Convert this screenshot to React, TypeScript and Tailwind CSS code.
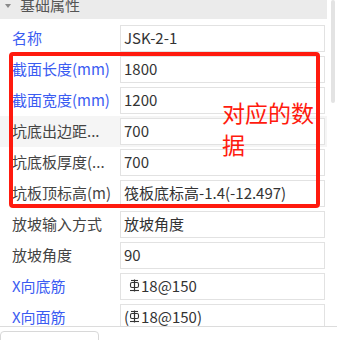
type Row = {
  label: string;
  value: string;
  blue?: boolean;
  shaded?: boolean;
  bar?: "plain" | "paren";
};

const rows: Row[] = [
  { label: "名称", value: "JSK-2-1", blue: true },
  { label: "截面长度(mm)", value: "1800", blue: true },
  { label: "截面宽度(mm)", value: "1200", blue: true },
  { label: "坑底出边距...", value: "700", shaded: true },
  { label: "坑底板厚度(...", value: "700" },
  { label: "坑板顶标高(m)", value: "筏板底标高-1.4(-12.497)" },
  { label: "放坡输入方式", value: "放坡角度" },
  { label: "放坡角度", value: "90" },
  { label: "X向底筋", value: "18@150", blue: true, bar: "plain" },
  { label: "X向面筋", value: "18@150)", blue: true, bar: "paren" },
];

const font = { fontFamily: '"Microsoft YaHei", "Noto Sans CJK SC", "Noto Sans", sans-serif' };

// HRB400 rebar grade symbol
function RebarMark() {
  return (
    <svg width="11" height="13" viewBox="0 0 11 13" className="mr-[1px] -mt-[2px]">
      <path d="M5.5 0.5 V12.5" stroke="#333" strokeWidth="1.2" />
      <path d="M2 1.5 H9" stroke="#333" strokeWidth="1.1" />
      <rect x="1.5" y="3.5" width="8" height="5" rx="1.5" fill="none" stroke="#333" strokeWidth="1.1" />
      <path d="M1 11.5 H10" stroke="#333" strokeWidth="1.1" />
    </svg>
  );
}

export default function App() {
  return (
    <div className="relative h-[340px] w-[337px] overflow-hidden bg-white" style={font}>
      <div className="flex h-[326px] overflow-hidden">
        <div className="w-[327px] shrink-0">
          <div className="flex h-[19px] items-center bg-[#ebebeb] pl-[5px]">
            <svg width="6" height="5" viewBox="0 0 6 5" className="mb-[6px]">
              <path d="M0 0 L6 0 L3 4 Z" fill="#8a8a8a" />
            </svg>
            <span className="-mt-[10px] ml-[9px] text-[15px] leading-none text-[#555]">基础属性</span>
          </div>
          <div className="pt-[4px]">
            {rows.map((r) => (
              <div
                key={r.label}
                className={`flex h-[31px] items-center ${r.shaded ? "bg-[#f5f5f5]" : ""}`}
              >
                <div
                  className={`w-[120px] shrink-0 whitespace-nowrap pl-[12px] text-[15px] ${
                    r.blue ? "text-[#3b5cf2]" : "text-[#444]"
                  }`}
                >
                  {r.label}
                </div>
                <div className="flex h-[27px] w-[205px] items-center whitespace-pre border-[1.5px] border-[#e2e2e2] bg-white pl-[3px] text-[15px] text-[#333]">
                  {r.bar === "plain" && <span className="w-[5px]" />}
                  {r.bar === "paren" && <span>(</span>}
                  {r.bar && <RebarMark />}
                  {r.value}
                </div>
              </div>
            ))}
          </div>
        </div>
        <div className="flex-1 pl-[4px]">
          <div className="h-[103px] w-[4px] rounded-full bg-[#e3e3e3]" />
        </div>
      </div>
      <div className="border-t-[1.5px] border-[#dcdcdc] pt-[4px]">
        <div className="h-[20px] w-[99px] rounded-t-[4px] border-[1.5px] border-[#d8d8d8]" />
      </div>

      <div className="absolute left-[9px] top-[52px] h-[156px] w-[311px] rounded-[4px] border-[4px] border-[#ff1a0e]" />
      <div className="absolute left-[222px] top-[96px] w-[100px] text-[23px] leading-[32px] text-[#ff1a0e]">
        对应的数据
      </div>
    </div>
  );
}
